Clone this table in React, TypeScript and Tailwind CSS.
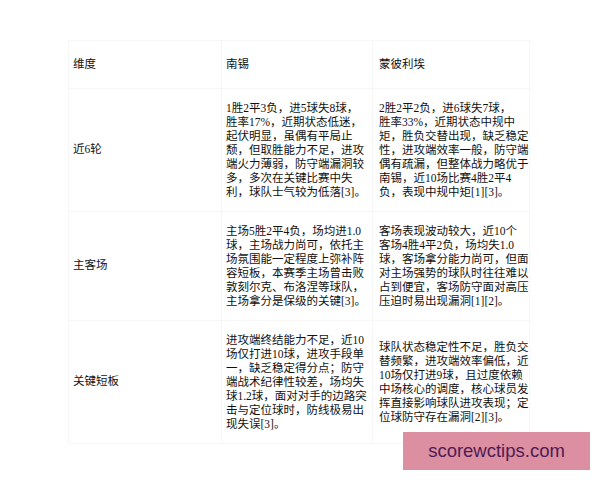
const rows: { label: string; a: string[]; b: string[] }[] = [
  {
    label: "近6轮",
    a: [
      "1胜2平3负，进5球失8球，",
      "胜率17%，近期状态低迷，",
      "起伏明显，虽偶有平局止",
      "颓，但取胜能力不足，进攻",
      "端火力薄弱，防守端漏洞较",
      "多，多次在关键比赛中失",
      "利，球队士气较为低落[3]。",
    ],
    b: [
      "2胜2平2负，进6球失7球，",
      "胜率33%，近期状态中规中",
      "矩，胜负交替出现，缺乏稳定",
      "性，进攻端效率一般，防守端",
      "偶有疏漏，但整体战力略优于",
      "南锡，近10场比赛4胜2平4",
      "负，表现中规中矩[1][3]。",
    ],
  },
  {
    label: "主客场",
    a: [
      "主场5胜2平4负，场均进1.0",
      "球，主场战力尚可，依托主",
      "场氛围能一定程度上弥补阵",
      "容短板，本赛季主场曾击败",
      "敦刻尔克、布洛涅等球队，",
      "主场拿分是保级的关键[3]。",
    ],
    b: [
      "客场表现波动较大，近10个",
      "客场4胜4平2负，场均失1.0",
      "球，客场拿分能力尚可，但面",
      "对主场强势的球队时往往难以",
      "占到便宜，客场防守面对高压",
      "压迫时易出现漏洞[1][2]。",
    ],
  },
  {
    label: "关键短板",
    a: [
      "进攻端终结能力不足，近10",
      "场仅打进10球，进攻手段单",
      "一，缺乏稳定得分点；防守",
      "端战术纪律性较差，场均失",
      "球1.2球，面对对手的边路突",
      "击与定位球时，防线极易出",
      "现失误[3]。",
    ],
    b: [
      "球队状态稳定性不足，胜负交",
      "替频繁，进攻端效率偏低，近",
      "10场仅打进9球，且过度依赖",
      "中场核心的调度，核心球员发",
      "挥直接影响球队进攻表现；定",
      "位球防守存在漏洞[2][3]。",
    ],
  },
];

function Lines({ lines }: { lines: string[] }) {
  return (
    <div className="leading-[14px]">
      {lines.map((l, i) => (
        <div key={i} className="whitespace-nowrap">
          {l}
        </div>
      ))}
    </div>
  );
}

export default function App() {
  return (
    <div
      className="relative w-[600px] h-[480px] bg-white pt-[40px] pl-[68px] text-[11.5px] text-[#111]"
      style={{ fontFamily: '"Liberation Serif", "Noto Sans CJK SC", serif' }}
    >
      <table className="table-fixed border-collapse border border-[#f6f6f6]">
        <colgroup>
          <col className="w-[153px]" />
          <col className="w-[151px]" />
          <col className="w-[157px]" />
        </colgroup>
        <thead>
          <tr className="h-[48px]">
            <th className="border border-[#f6f6f6] pl-1 text-left font-normal">维度</th>
            <th className="border border-[#f6f6f6] pl-1 text-left font-normal">南锡</th>
            <th className="border border-[#f6f6f6] pl-1.5 text-left font-normal">蒙彼利埃</th>
          </tr>
        </thead>
        <tbody>
          {rows.map((r) => (
            <tr key={r.label}>
              <td className="border border-[#f6f6f6] pl-1 align-middle">{r.label}</td>
              <td className="border border-[#f6f6f6] pl-1 py-3 align-middle">
                <Lines lines={r.a} />
              </td>
              <td className="border border-[#f6f6f6] pl-1.5 py-3 align-middle">
                <Lines lines={r.b} />
              </td>
            </tr>
          ))}
        </tbody>
      </table>

      <div
        className="absolute left-[403px] top-[432px] w-[187px] h-[38px] bg-[#dc8fa0] flex items-center justify-center text-[18.5px] text-[#4f1a55]"
        style={{ fontFamily: '"Liberation Sans", Arial, sans-serif' }}
      >
        scorewctips.com
      </div>
    </div>
  );
}
